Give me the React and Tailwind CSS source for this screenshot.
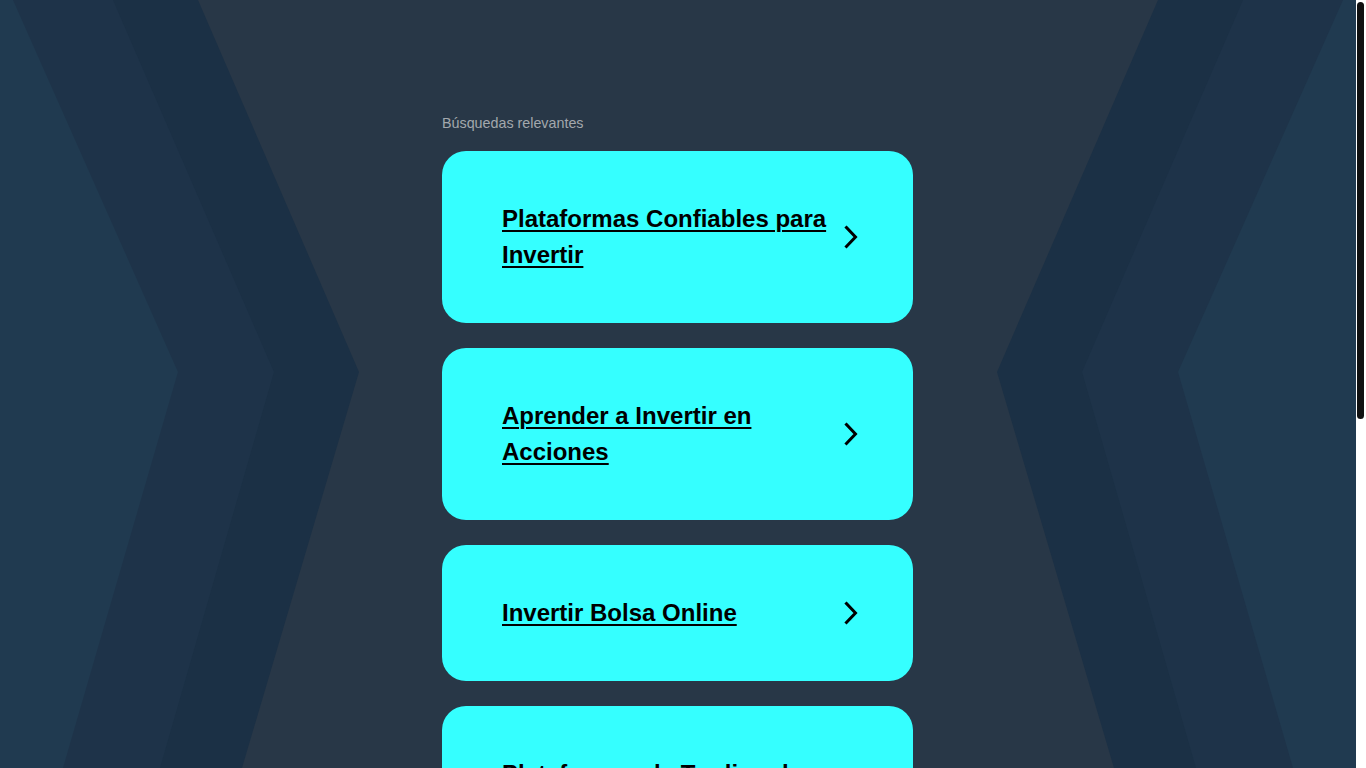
import React from 'react'

const searches = [
    "Plataformas Confiables para Invertir",
    "Aprender a Invertir en Acciones",
    "Invertir Bolsa Online",
    "Plataformas de Trading de Acciones",
    "Cursos de Inversión en Bolsa",
    "Invertir en Fondos",
]

const Chevron = () => (
    <svg width="14" height="24" viewBox="0 0 14 24" fill="none" className="shrink-0">
        <path d="M2.5 2.5l9 9.5-9 9.5" stroke="#000" strokeWidth="3" strokeLinecap="square" strokeLinejoin="miter" />
    </svg>
)

const Background = () => (
    <svg className="absolute inset-0 h-full w-full" viewBox="0 0 1356 768" preserveAspectRatio="none">
        <rect width="1356" height="768" fill="#283747" />
        {/* left chevrons */}
        <polygon points="0,0 198,0 359,372 242,768 0,768" fill="#1b3045" />
        <polygon points="0,0 113,0 274,372 160,768 0,768" fill="#1e3349" />
        <polygon points="0,0 13,0 178,372 63,768 0,768" fill="#203a50" />
        {/* right chevrons */}
        <polygon points="1356,0 1158,0 997,372 1114,768 1356,768" fill="#1b3045" />
        <polygon points="1356,0 1243,0 1082,372 1196,768 1356,768" fill="#1e3349" />
        <polygon points="1356,0 1343,0 1178,372 1293,768 1356,768" fill="#203a50" />
    </svg>
)

const App = () => {
    return (
        <div className="flex h-screen w-full overflow-hidden bg-white" style={{ fontFamily: '"Liberation Sans", Arial, sans-serif' }}>
            <div className="relative h-full flex-1 overflow-hidden pr-[1px]">
                <Background />
                <div className="relative mx-auto w-[471px] pt-[114px] pb-[170px]">
                    <div className="text-[14.3px] leading-[18px] text-[#a3a8ad] mb-[19px]">Búsquedas relevantes</div>
                    <div className="flex flex-col gap-[25px]">
                        {searches.map((s) => (
                            <a key={s} href="#" className="flex items-center justify-between rounded-[24px] bg-[#35ffff] pl-[60px] pr-[55px] py-[50px]">
                                <span className="w-[330px] text-[24px] leading-[36px] font-bold text-black underline decoration-2 underline-offset-[3px]">{s}</span>
                                <Chevron />
                            </a>
                        ))}
                    </div>
                </div>
            </div>
            {/* scrollbar */}
            <div className="h-full w-[10px] shrink-0 bg-white pl-[1px] pt-[2px]">
                <div className="h-[417px] w-[7px] rounded-full bg-[#111]" />
            </div>
        </div>
    )
}

export default App
